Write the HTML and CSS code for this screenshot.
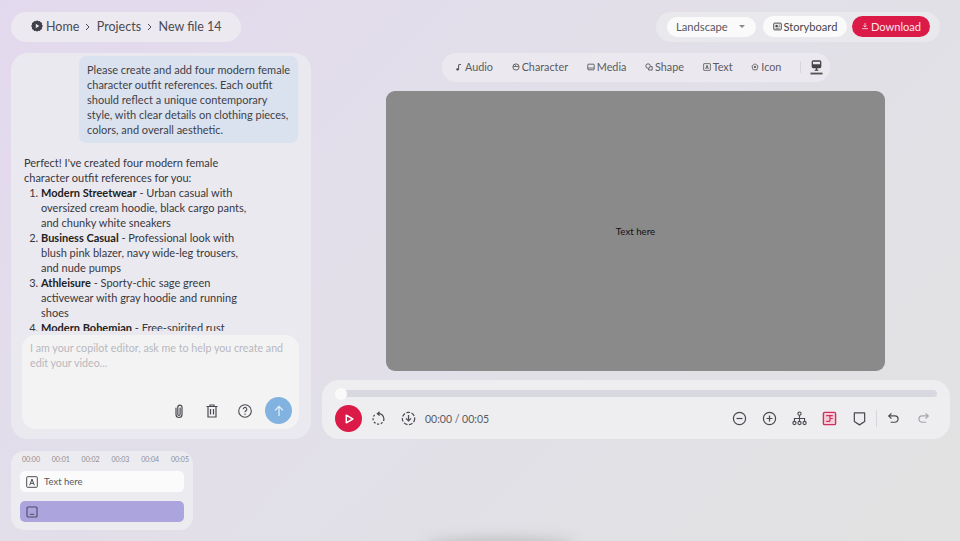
FILE: index.html
```html
<!DOCTYPE html>
<html lang="en">
<head>
<meta charset="utf-8">
<title>New file 14</title>
<link rel="stylesheet" href="styles.css">
</head>
<body>
<div class="page">
  <header class="topbar">
    <nav class="crumbs">
      <svg class="logo" viewBox="0 0 12 12"><path d="M6 .2l1.300 1 1.600-.3.700 1.400 1.500.6-.2 1.600L11.900 6l-1 1.500.2 1.600-1.500.6-.7 1.400-1.600-.3-1.300 1-1.300-1-1.600.3-.7-1.400-1.500-.6.2-1.600L.1 6l1-1.500-.2-1.600 1.500-.6.7-1.400 1.600.3z" fill="#3f3f46"/><path d="M4.800 3.800v4.400L8.300 6z" fill="#ece9f1"/></svg>
      <span>Home</span><svg class="sep" viewBox="0 0 5 8"><path d="M1 1l3 3-3 3" fill="none" stroke="#4a4a52"/></svg><span>Projects</span><svg class="sep" viewBox="0 0 5 8"><path d="M1 1l3 3-3 3" fill="none" stroke="#4a4a52"/></svg><span>New file 14</span>
    </nav>
    <div class="actions">
      <div class="select"><span>Landscape</span><i class="caret"></i></div>
      <button class="btn white"><svg class="ic big" viewBox="0 0 12 12"><rect x="1" y="1.500" width="10" height="9" rx="1" fill="none" stroke="#444" stroke-width="1.300"/><rect x="3.300" y="3.800" width="3" height="3" fill="#444"/><path d="M7.500 4h1.500M7.500 6h1.500M3.300 8.300h5.500" stroke="#444"/></svg>Storyboard</button>
      <button class="btn red"><svg class="ic" viewBox="0 0 12 12"><path d="M6 1.500v6M3.600 5.200L6 7.600l2.400-2.400M1.500 10h9" fill="none" stroke="#fbe5ea" stroke-width="1.200"/></svg>Download</button>
    </div>
  </header>

  <div class="workspace">
    <aside class="side">
      <section class="chat">
        <div class="messages">
          <div class="user">Please create and add four modern female<br>character outfit references. Each outfit<br>should reflect a unique contemporary<br>style, with clear details on clothing pieces,<br>colors, and overall aesthetic.</div>
          <div class="reply">
            <p>Perfect! I've created four modern female character outfit references for you:</p>
            <ol>
              <li><b>Modern Streetwear</b> - Urban casual with oversized cream hoodie, black cargo pants, and chunky white sneakers</li>
              <li><b>Business Casual</b> - Professional look with blush pink blazer, navy wide-leg trousers, and nude pumps</li>
              <li><b>Athleisure</b> - Sporty-chic sage green activewear with gray hoodie and running shoes</li>
              <li><b>Modern Bohemian</b> - Free-spirited rust</li>
            </ol>
          </div>
        </div>
        <div class="composer">
          <p class="placeholder">I am your copilot editor, ask me to help you create and edit your video...</p>
          <div class="composer-tools">
            <svg class="tool" viewBox="0 0 16 16"><path d="M5 5v6.500a3 3 0 0 0 6 0V4.200a2.100 2.100 0 0 0-4.200 0v7a1.100 1.100 0 0 0 2.300 0V5" fill="none" stroke="#4a4a52" stroke-width="1.200" stroke-linecap="round"/></svg>
            <svg class="tool" viewBox="0 0 16 16"><path d="M2.500 3.500h11M4 3.500v10.500h8V3.500M6.500 6v5.500M9.500 6v5.500M6 3.500V2h4v1.500" fill="none" stroke="#4a4a52" stroke-width="1.200"/></svg>
            <svg class="tool" viewBox="0 0 16 16"><circle cx="8" cy="8" r="6.300" fill="none" stroke="#4a4a52" stroke-width="1.100"/><path d="M6.200 6.300a1.800 1.800 0 1 1 2.700 1.500c-.6.400-.9.700-.9 1.400" fill="none" stroke="#4a4a52" stroke-width="1.100"/><circle cx="8" cy="11.200" r=".7" fill="#4a4a52"/></svg>
            <span class="send"><svg viewBox="0 0 14 14"><path d="M7 12V2.500M3 6.300l4-4 4 4" fill="none" stroke="#e8f1fa" stroke-width="1.200"/></svg></span>
          </div>
        </div>
      </section>

      <section class="timeline">
        <div class="ticks"><span>00:00</span><span>00:01</span><span>00:02</span><span>00:03</span><span>00:04</span><span>00:05</span></div>
        <div class="track text-track"><svg class="track-ic" viewBox="0 0 12 12"><rect x=".7" y=".7" width="10.600" height="10.600" rx=".8" fill="none" stroke="#4a4a52" stroke-width="1"/><path d="M3.700 9.300L6 3l2.300 6.300M4.500 7.300h3" fill="none" stroke="#4a4a52" stroke-width="1"/></svg><span>Text here</span></div>
        <div class="track media-track"><svg class="track-ic" viewBox="0 0 12 12"><rect x="1" y="1" width="10" height="10" rx="1" fill="none" stroke="#4d4a68" stroke-width="1.100"/><path d="M3.800 8.300h4.400" stroke="#4d4a68"/></svg></div>
      </section>
    </aside>

    <main class="stage">
      <div class="toolbar">
        <span class="tool-item"><svg class="ic" viewBox="0 0 10 10"><path d="M4.500 8V2.200L7.500 1.800" fill="none" stroke="#444" stroke-width="1.100"/><ellipse cx="3.200" cy="8" rx="1.700" ry="1.400" fill="#444"/></svg>Audio</span>
        <span class="tool-item"><svg class="ic" viewBox="0 0 10 10"><circle cx="5" cy="5" r="3.900" fill="none" stroke="#444" stroke-width="1"/><path d="M1.500 4.500c2-.2 5-.2 7 0M3 1.800L5 4" fill="none" stroke="#444" stroke-width=".9"/></svg>Character</span>
        <span class="tool-item"><svg class="ic" viewBox="0 0 10 10"><rect x="1" y="1.500" width="8" height="7" rx=".8" fill="none" stroke="#444" stroke-width="1"/><path d="M1.500 6.300h7" stroke="#444" stroke-width=".9"/></svg>Media</span>
        <span class="tool-item"><svg class="ic" viewBox="0 0 10 10"><circle cx="3.800" cy="3.800" r="2.800" fill="none" stroke="#444" stroke-width="1"/><path d="M6.800 4.500H9v4.300H4.500V6.800" fill="none" stroke="#444" stroke-width="1"/></svg>Shape</span>
        <span class="tool-item"><svg class="ic" viewBox="0 0 10 10"><rect x=".8" y=".8" width="8.400" height="8.400" rx=".5" fill="none" stroke="#444" stroke-width=".9"/><path d="M3.300 7.500L5 2.800l1.700 4.700M3.900 6h2.200" fill="none" stroke="#444" stroke-width=".9"/></svg>Text</span>
        <span class="tool-item"><svg class="ic" viewBox="0 0 10 10"><path d="M5 1l3.800 2.800-1.400 4.700H2.600L1.200 3.800z" fill="none" stroke="#444" stroke-width=".9"/><circle cx="5" cy="5" r="1.300" fill="#444"/></svg>Icon</span>
        <i class="divider"></i>
        <svg class="stamp" viewBox="0 0 14 16"><rect x="2.500" y="1" width="9" height="7" rx="1" fill="none" stroke="#444" stroke-width="1.400"/><rect x="2.500" y="4.500" width="9" height="3.500" fill="#444"/><path d="M7 8v3" stroke="#444" stroke-width="1.500"/><path d="M5 11h4" stroke="#444" stroke-width="1.200"/><rect x=".5" y="13.500" width="13" height="2" fill="#555"/></svg>
      </div>

      <div class="canvas"><span>Text here</span></div>

      <section class="player">
        <div class="progress"><i class="knob"></i></div>
        <div class="controls">
          <button class="play"><svg viewBox="0 0 12 12"><path d="M3.300 2.200v7.600L9.800 6z" fill="none" stroke="#fff" stroke-width="1.500" stroke-linejoin="round"/></svg></button>
          <svg class="ctl first" viewBox="0 0 16 16"><path d="M9.200 .8L6.800 2.800l2.400 2" fill="none" stroke="#4a4a52" stroke-width="1.300"/><path d="M7 2.800A5.800 5.800 0 0 1 13.800 8.500" fill="none" stroke="#4a4a52" stroke-width="1.300"/><path d="M13.800 8.500A5.800 5.800 0 1 1 4 4" fill="none" stroke="#4a4a52" stroke-width="1.400" stroke-dasharray="2.200 1.800"/></svg>
          <svg class="ctl" viewBox="0 0 16 16"><circle cx="8" cy="8" r="6.600" fill="none" stroke="#4a4a52" stroke-width="1.300" stroke-dasharray="4 1.600"/><path d="M8 4.300v6.200M5.300 7.800L8 10.500l2.700-2.700" fill="none" stroke="#4a4a52" stroke-width="1.300"/></svg>
          <span class="time">00:00 / 00:05</span>
          <span class="spacer"></span>
          <svg class="ctl" viewBox="0 0 16 16"><circle cx="8" cy="8" r="6.500" fill="none" stroke="#4a4a52" stroke-width="1.300"/><path d="M4.800 8h6.400" stroke="#4a4a52" stroke-width="1.300"/></svg>
          <svg class="ctl" viewBox="0 0 16 16"><circle cx="8" cy="8" r="6.500" fill="none" stroke="#4a4a52" stroke-width="1.300"/><path d="M4.800 8h6.400M8 4.800v6.400" stroke="#4a4a52" stroke-width="1.300"/></svg>
          <svg class="ctl" viewBox="0 0 16 16"><circle cx="8" cy="2.800" r="1.700" fill="none" stroke="#4a4a52" stroke-width="1.200"/><circle cx="2.600" cy="12.800" r="1.700" fill="none" stroke="#4a4a52" stroke-width="1.200"/><circle cx="8" cy="12.800" r="1.700" fill="none" stroke="#4a4a52" stroke-width="1.200"/><circle cx="13.400" cy="12.800" r="1.700" fill="none" stroke="#4a4a52" stroke-width="1.200"/><path d="M8 4.500v6.600M2.600 11V8h10.800v3" fill="none" stroke="#4a4a52" stroke-width="1.200"/></svg>
          <svg class="ctl" viewBox="0 0 16 16"><rect x="1.500" y="1.500" width="13" height="13" rx="1.300" fill="#f3cdd8" stroke="#d2315f" stroke-width="1.500"/><path d="M4.500 5h7M8.500 8h3M4.500 11h4M8.500 5v6" fill="none" stroke="#d2315f" stroke-width="1.300"/></svg>
          <svg class="ctl shield" viewBox="0 0 16 16"><path d="M2.500 2h11v9.200L8 14.800l-5.500-3.600z" fill="none" stroke="#4a4a52" stroke-width="1.300" stroke-linejoin="round"/></svg>
          <i class="divider tall"></i>
          <svg class="ctl" viewBox="0 0 16 16"><path d="M5.800 2.500L3 5.300l2.800 2.800" fill="none" stroke="#4a4a52" stroke-width="1.300"/><path d="M3 5.300h6.500a3.300 3.300 0 0 1 0 6.700H5" fill="none" stroke="#4a4a52" stroke-width="1.300"/></svg>
          <svg class="ctl last" viewBox="0 0 16 16"><path d="M10.200 2.500L13 5.300l-2.800 2.800" fill="none" stroke="#a5a5ac" stroke-width="1.300"/><path d="M13 5.300H6.500a3.300 3.300 0 0 0 0 6.700H11" fill="none" stroke="#a5a5ac" stroke-width="1.300"/></svg>
        </div>
      </section>
    </main>
  </div>
</div>
<div class="glow"></div>
</body>
</html>
```
FILE: styles.css
```css
* { box-sizing: border-box; }
html, body { height: 100%; }
body {
  margin: 0;
  overflow: hidden;
  position: relative;
  font-family: "Lato", "Noto Sans", sans-serif;
  color: #3d3d44;
  background: linear-gradient(135deg, #e3d9ee 0%, #e2deea 35%, #e1e0e6 65%, #e2e2e2 100%);
}
.page { padding: 11px 10px 0 11px; }
.topbar { display: flex; justify-content: space-between; align-items: center; height: 31px; padding-right: 10px; }
.crumbs {
  width: 230px; height: 30px; padding: 0 0 1px 20px;
  display: flex; align-items: center;
  border-radius: 15px;
  background: #ece9f1;
  font-size: 12.500px; color: #4a4a52;
}
.logo { width: 12px; height: 12px; margin-right: 3px; }
.sep { width: 5px; height: 8px; margin: 1px 6.500px 0 6px; }
.actions {
  width: 284px; height: 30px; padding: 0 0 0 11px;
  display: flex; align-items: center;
  border-radius: 15px;
  background: #e9e8ec;
}
.select {
  width: 89px; height: 20px; padding: 0 10px 1px 9px;
  display: flex; align-items: center; justify-content: space-between;
  border-radius: 10px; background: #fafafa;
  font-size: 11.200px; color: #58585f;
}
.caret { width: 0; height: 0; margin-right: 1px; border: 3px solid transparent; border-top: 3px solid #888; border-bottom: 0; }
.btn {
  height: 21px; padding: 0 0 1px; border: 0;
  display: flex; align-items: center; justify-content: center; gap: 2px;
  border-radius: 11px;
  font: inherit; font-size: 11.100px;
}
.white { width: 84px; margin-left: 7px; background: #fafafa; color: #45454c; }
.red { width: 78px; margin-left: 5px; background: #dc1a48; color: #fbe5ea; }
.ic { width: 8px; height: 8px; flex: none; }
.big { width: 9px; height: 9px; }

.workspace { display: grid; grid-template-columns: 300px 628px; column-gap: 11px; margin-top: 11px; }
.side { display: flex; flex-direction: column; gap: 12px; }

.chat {
  height: 386px; padding: 3px 12px 10px 11px;
  display: flex; flex-direction: column;
  border-radius: 17px;
  background: #ebe9f0;
}
.messages { height: 275px; overflow: hidden; flex: none; font-size: 11px; line-height: 15px; color: #3f3f46; }
.user {
  width: 219px; height: 87px; margin-left: 57px; padding: 6px 0 6px 8px;
  border-radius: 7px;
  background: #dbe2ef;
  white-space: nowrap;
}
.reply { padding: 12px 2px 0; width: 232px; color: #37373d; }
.reply p { margin: 0; }
.reply ol { margin: 0; padding-left: 17px; }
.reply b { color: #222; }

.composer {
  flex: 1; margin-top: 4px; padding: 5px 7px 5px 8px;
  display: flex; flex-direction: column; justify-content: space-between;
  border-radius: 14px;
  background: #f3f3f4;
}
.placeholder { margin: 0; font-size: 10.700px; line-height: 15px; color: #b8b8bd; }
.composer-tools { display: flex; align-items: center; justify-content: flex-end; gap: 17px; }
.tool { width: 16px; height: 16px; }
.send { width: 27px; height: 27px; margin-left: -5px; border-radius: 50%; background: #82b3e0; display: flex; align-items: center; justify-content: center; }
.send svg { width: 14px; height: 14px; }

.timeline {
  width: 182px; height: 79px; padding: 3px 9px 0 9px;
  border-radius: 13px;
  background: #ecebf0;
}
.ticks { display: flex; justify-content: space-between; margin: 0 -5px 0 2px; font-size: 7px; line-height: 10px; color: #8d8d94; }
.track { height: 21px; display: flex; align-items: center; gap: 6px; padding-left: 6px; border-radius: 5px; font-size: 9.500px; }
.text-track { margin-top: 7px; background: #fbfbfb; color: #58585f; }
.media-track { margin-top: 9px; background: #aca4dd; }
.track-ic { width: 12px; height: 12px; }

.stage { display: flex; flex-direction: column; align-items: center; }
.toolbar {
  height: 29px; width: 388px; padding: 0 0 2px 13px;
  display: flex; align-items: center;
  border-radius: 14px;
  background: #ebe9ef;
  font-size: 10.800px; color: #5a5a62;
}
.tool-item { display: flex; align-items: center; gap: 2px; margin-right: 18.700px; }
.divider { width: 1px; height: 12px; background: #d6d6db; flex: none; }
.stamp { width: 13px; height: 15px; margin-left: 9px; margin-top: 1px; }
.canvas {
  width: 499px; height: 280px; margin: 9px 1px 0 0;
  display: flex; align-items: center; justify-content: center;
  border-radius: 9px;
  background: #8a8a8a;
  font-size: 9.700px; color: #111;
}
.player {
  width: 628px; height: 59px; margin-top: 9px; padding: 10px 13px 0;
  border-radius: 17px;
  background: #eeeef0;
}
.progress { position: relative; height: 7px; border-radius: 4px; background: #d7d8e0; margin: 0 0 0 6px; }
.knob { position: absolute; left: -6px; top: -2.500px; width: 12px; height: 12px; border-radius: 50%; background: #fafafa; }
.controls { display: flex; align-items: center; height: 27px; margin-top: 8px; }
.play { width: 27px; height: 27px; padding: 0; border: 0; border-radius: 50%; background: #dc1a48; display: flex; align-items: center; justify-content: center; }
.play svg { width: 12px; height: 12px; }
.ctl { width: 15px; height: 15px; flex: none; margin-right: 15px; }
.first { margin-left: 8.500px; }
.time { margin-left: -5.500px; font-size: 10.500px; color: #5a5a62; }
.spacer { flex: 1; }
.shield { margin-right: 9px; }
.tall { height: 17px; margin-right: 9px; }
.last { margin-right: 6.500px; }

.glow {
  position: absolute; left: 425px; bottom: -12px;
  width: 150px; height: 14px;
  border-radius: 50%;
  background: #b9b9bc;
  filter: blur(7px);
}
```
